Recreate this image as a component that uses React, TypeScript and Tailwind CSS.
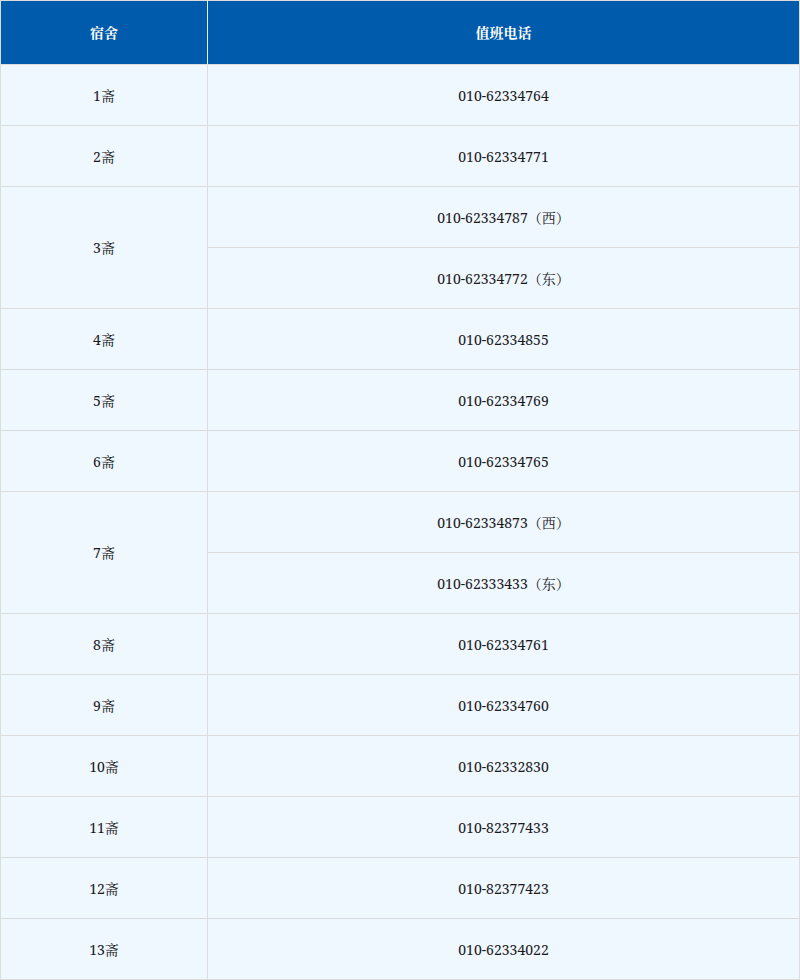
import React from "react";

type Row = { name: string; phones: string[] };

const rows: Row[] = [
  { name: "1斋", phones: ["010-62334764"] },
  { name: "2斋", phones: ["010-62334771"] },
  { name: "3斋", phones: ["010-62334787（西）", "010-62334772（东）"] },
  { name: "4斋", phones: ["010-62334855"] },
  { name: "5斋", phones: ["010-62334769"] },
  { name: "6斋", phones: ["010-62334765"] },
  { name: "7斋", phones: ["010-62334873（西）", "010-62333433（东）"] },
  { name: "8斋", phones: ["010-62334761"] },
  { name: "9斋", phones: ["010-62334760"] },
  { name: "10斋", phones: ["010-62332830"] },
  { name: "11斋", phones: ["010-82377433"] },
  { name: "12斋", phones: ["010-82377423"] },
  { name: "13斋", phones: ["010-62334022"] },
];

export default function App() {
  const cell = "border border-[#dcdcdc] bg-[#eff7ff] h-[61px] p-0 text-center align-middle text-[14px] text-[#1a1a1a]";
  return (
    <div
      className="w-[800px] bg-white"
      style={{ fontFamily: '"Noto Serif", "Noto Serif CJK SC", "Liberation Serif", "Noto Sans CJK SC", serif' }}
    >
      <table className="w-[800px] border-collapse table-fixed">
        <colgroup>
          <col className="w-[207px]" />
          <col />
        </colgroup>
        <thead>
          <tr>
            <th className="h-[64px] p-0 bg-[#005bac] text-white text-[14px] font-bold border border-[#dcdcdc] border-r-[#e6eef7]">宿舍</th>
            <th className="h-[64px] p-0 bg-[#005bac] text-white text-[14px] font-bold border border-[#dcdcdc]">值班电话</th>
          </tr>
        </thead>
        <tbody>
          {rows.flatMap((r) =>
            r.phones.map((p, i) => (
              <tr key={r.name + i}>
                {i === 0 && (
                  <td rowSpan={r.phones.length} className={cell}>
                    {r.name}
                  </td>
                )}
                <td className={cell}>{p}</td>
              </tr>
            ))
          )}
        </tbody>
      </table>
    </div>
  );
}
